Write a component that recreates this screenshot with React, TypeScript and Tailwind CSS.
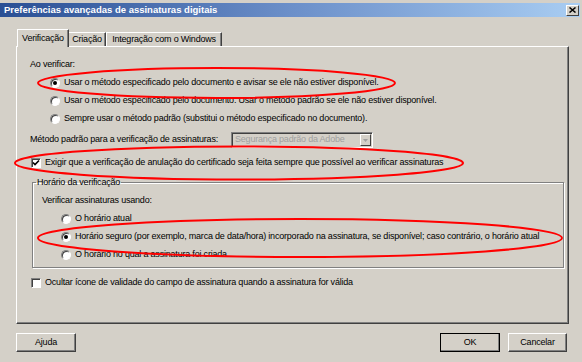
import React from 'react';

const Radio = ({ checked = false }: { checked?: boolean }) => (
    <span className="relative inline-flex w-[10px] h-[10px] rounded-full bg-white border border-t-[#808080] border-l-[#808080] border-r-white border-b-white shadow-[inset_1px_1px_0_#404040] items-center justify-center shrink-0">
        {checked && <span className="w-[4px] h-[4px] rounded-full bg-black" />}
    </span>
);

const Checkbox = ({ checked = false }: { checked?: boolean }) => (
    <span className="inline-flex w-[10px] h-[10px] bg-white border border-t-[#808080] border-l-[#808080] border-r-white border-b-white shadow-[inset_1px_1px_0_#404040] items-center justify-center shrink-0">
        {checked && (
            <svg width="8" height="8" viewBox="0 0 8 8">
                <path d="M1 3.5 L3 5.5 L7 1.5" fill="none" stroke="#000" strokeWidth="1.6" />
            </svg>
        )}
    </span>
);

const Button = ({ label, isDefault = false, width }: { label: string; isDefault?: boolean; width: string }) => (
    <div className={`${width} h-[19px] flex items-center justify-center bg-[#d4d0c8] border ${isDefault ? 'border-black' : 'border-t-white border-l-white border-r-[#404040] border-b-[#404040]'} shadow-[inset_-1px_-1px_0_#808080]`}>
        {label}
    </div>
);

const OptionRow = ({ children }: { children: React.ReactNode }) => (
    <div className="h-[18px] flex items-center gap-[4px]">{children}</div>
);

export default function App() {
    return (
        <div className="relative w-[582px] h-[362px] bg-[#d4d0c8] overflow-hidden text-[9px] tracking-[-0.2px] text-black font-['Liberation_Sans',Arial,sans-serif]">
            {/* title bar */}
            <div className="mt-[3px] mr-[2px] h-[14px] flex items-center justify-between pl-[4px] pr-[1px] bg-linear-to-r from-[#2a4f94] via-[#6b8fc9] to-[#a9cdf2]">
                <span className="text-white font-bold text-[9.5px] tracking-normal">Preferências avançadas de assinaturas digitais</span>
                <div className="w-[13px] h-[11px] bg-[#d4d0c8] border border-t-white border-l-white border-r-[#404040] border-b-[#404040] flex items-center justify-center">
                    <svg width="7" height="6" viewBox="0 0 7 6">
                        <path d="M0.5 0.5 L6.5 5.5 M6.5 0.5 L0.5 5.5" stroke="#000" strokeWidth="1.5" />
                    </svg>
                </div>
            </div>

            {/* tabs */}
            <div className="mt-[12px] pl-[17px] h-[17px] flex items-end">
                <div className="relative z-10 -mb-px h-[18px] w-[52px] bg-[#d4d0c8] border-l border-t border-white border-r-[1px] border-r-[#404040] shadow-[inset_-1px_0_0_#808080] flex items-center justify-center">
                    Verificação
                </div>
                <div className="h-[14px] w-[37px] border-t border-white border-r border-r-[#404040] shadow-[inset_-1px_0_0_#808080] flex items-center justify-center">
                    Criação
                </div>
                <div className="h-[14px] w-[116px] border-t border-l border-white border-r border-r-[#404040] shadow-[inset_-1px_0_0_#808080] flex items-center justify-center">
                    Integração com o Windows
                </div>
            </div>

            {/* panel */}
            <div className="ml-[16px] w-[553px] h-[278px] border border-t-white border-l-white border-r-[#404040] border-b-[#404040] shadow-[inset_-1px_-1px_0_#808080] pl-[13px] pt-[9px]">
                <div className="h-[18px] flex items-center">Ao verificar:</div>
                <div className="pl-[20px]">
                    <OptionRow><Radio checked /><span>Usar o método especificado pelo documento e avisar se ele não estiver disponível.</span></OptionRow>
                    <OptionRow><Radio /><span>Usar o método especificado pelo documento. Usar o método padrão se ele não estiver disponível.</span></OptionRow>
                    <OptionRow><Radio /><span>Sempre usar o método padrão (substitui o método especificado no documento).</span></OptionRow>
                </div>

                <div className="mt-[3px] h-[18px] flex items-center">
                    <span className="w-[201px]">Método padrão para a verificação de assinaturas:</span>
                    <div className="w-[142px] h-[16px] flex items-center justify-between border border-t-[#808080] border-l-[#808080] border-r-white border-b-white shadow-[inset_1px_1px_0_#404040] pl-[3px] pr-[1px]">
                        <span className="text-[#a0a0a0]">Segurança padrão da Adobe</span>
                        <div className="w-[11px] h-[12px] border border-t-white border-l-white border-r-[#404040] border-b-[#404040] flex items-center justify-center">
                            <svg width="5" height="3" viewBox="0 0 5 3"><path d="M0 0 H5 L2.5 3 Z" fill="#a0a0a0" /></svg>
                        </div>
                    </div>
                </div>

                <div className="mt-[5px] h-[18px] flex items-center gap-[4px] pl-[1px]">
                    <Checkbox checked />
                    <span>Exigir que a verificação de anulação do certificado seja feita sempre que possível ao verificar assinaturas</span>
                </div>

                <fieldset className="mt-[4px] ml-[2px] w-[532px] h-[92px] border border-[#808080] shadow-[inset_1px_1px_0_#fff,1px_1px_0_#fff] pl-[9px]">
                    <legend className="ml-[-6px] px-[1px] leading-[12px]">Horário da verificação</legend>
                    <div className="mt-[4px] h-[18px] flex items-center">Verificar assinaturas usando:</div>
                    <div className="pl-[19px]">
                        <OptionRow><Radio /><span>O horário atual</span></OptionRow>
                        <OptionRow><Radio checked /><span>Horário seguro (por exemplo, marca de data/hora) incorporado na assinatura, se disponível; caso contrário, o horário atual</span></OptionRow>
                        <OptionRow><Radio /><span>O horário no qual a assinatura foi criada</span></OptionRow>
                    </div>
                </fieldset>

                <div className="mt-[6px] h-[18px] flex items-center gap-[4px] pl-[1px]">
                    <Checkbox />
                    <span>Ocultar ícone de validade do campo de assinatura quando a assinatura for válida</span>
                </div>
            </div>

            {/* buttons */}
            <div className="mt-[9px] pl-[16px] pr-[15px] flex items-center">
                <Button label="Ajuda" width="w-[60px]" />
                <div className="ml-auto flex gap-[8px]">
                    <Button label="OK" width="w-[60px]" isDefault />
                    <Button label="Cancelar" width="w-[59px]" />
                </div>
            </div>

            {/* red annotation marks */}
            <svg className="absolute inset-0 pointer-events-none" width="582" height="362">
                <ellipse cx="216.5" cy="83" rx="178.5" ry="15" fill="none" stroke="#ff0000" strokeWidth="2" />
                <ellipse cx="239" cy="163" rx="224" ry="16.5" fill="none" stroke="#ff0000" strokeWidth="2" />
                <ellipse cx="300" cy="238" rx="262" ry="19" fill="none" stroke="#ff0000" strokeWidth="2" />
            </svg>
        </div>
    );
}
